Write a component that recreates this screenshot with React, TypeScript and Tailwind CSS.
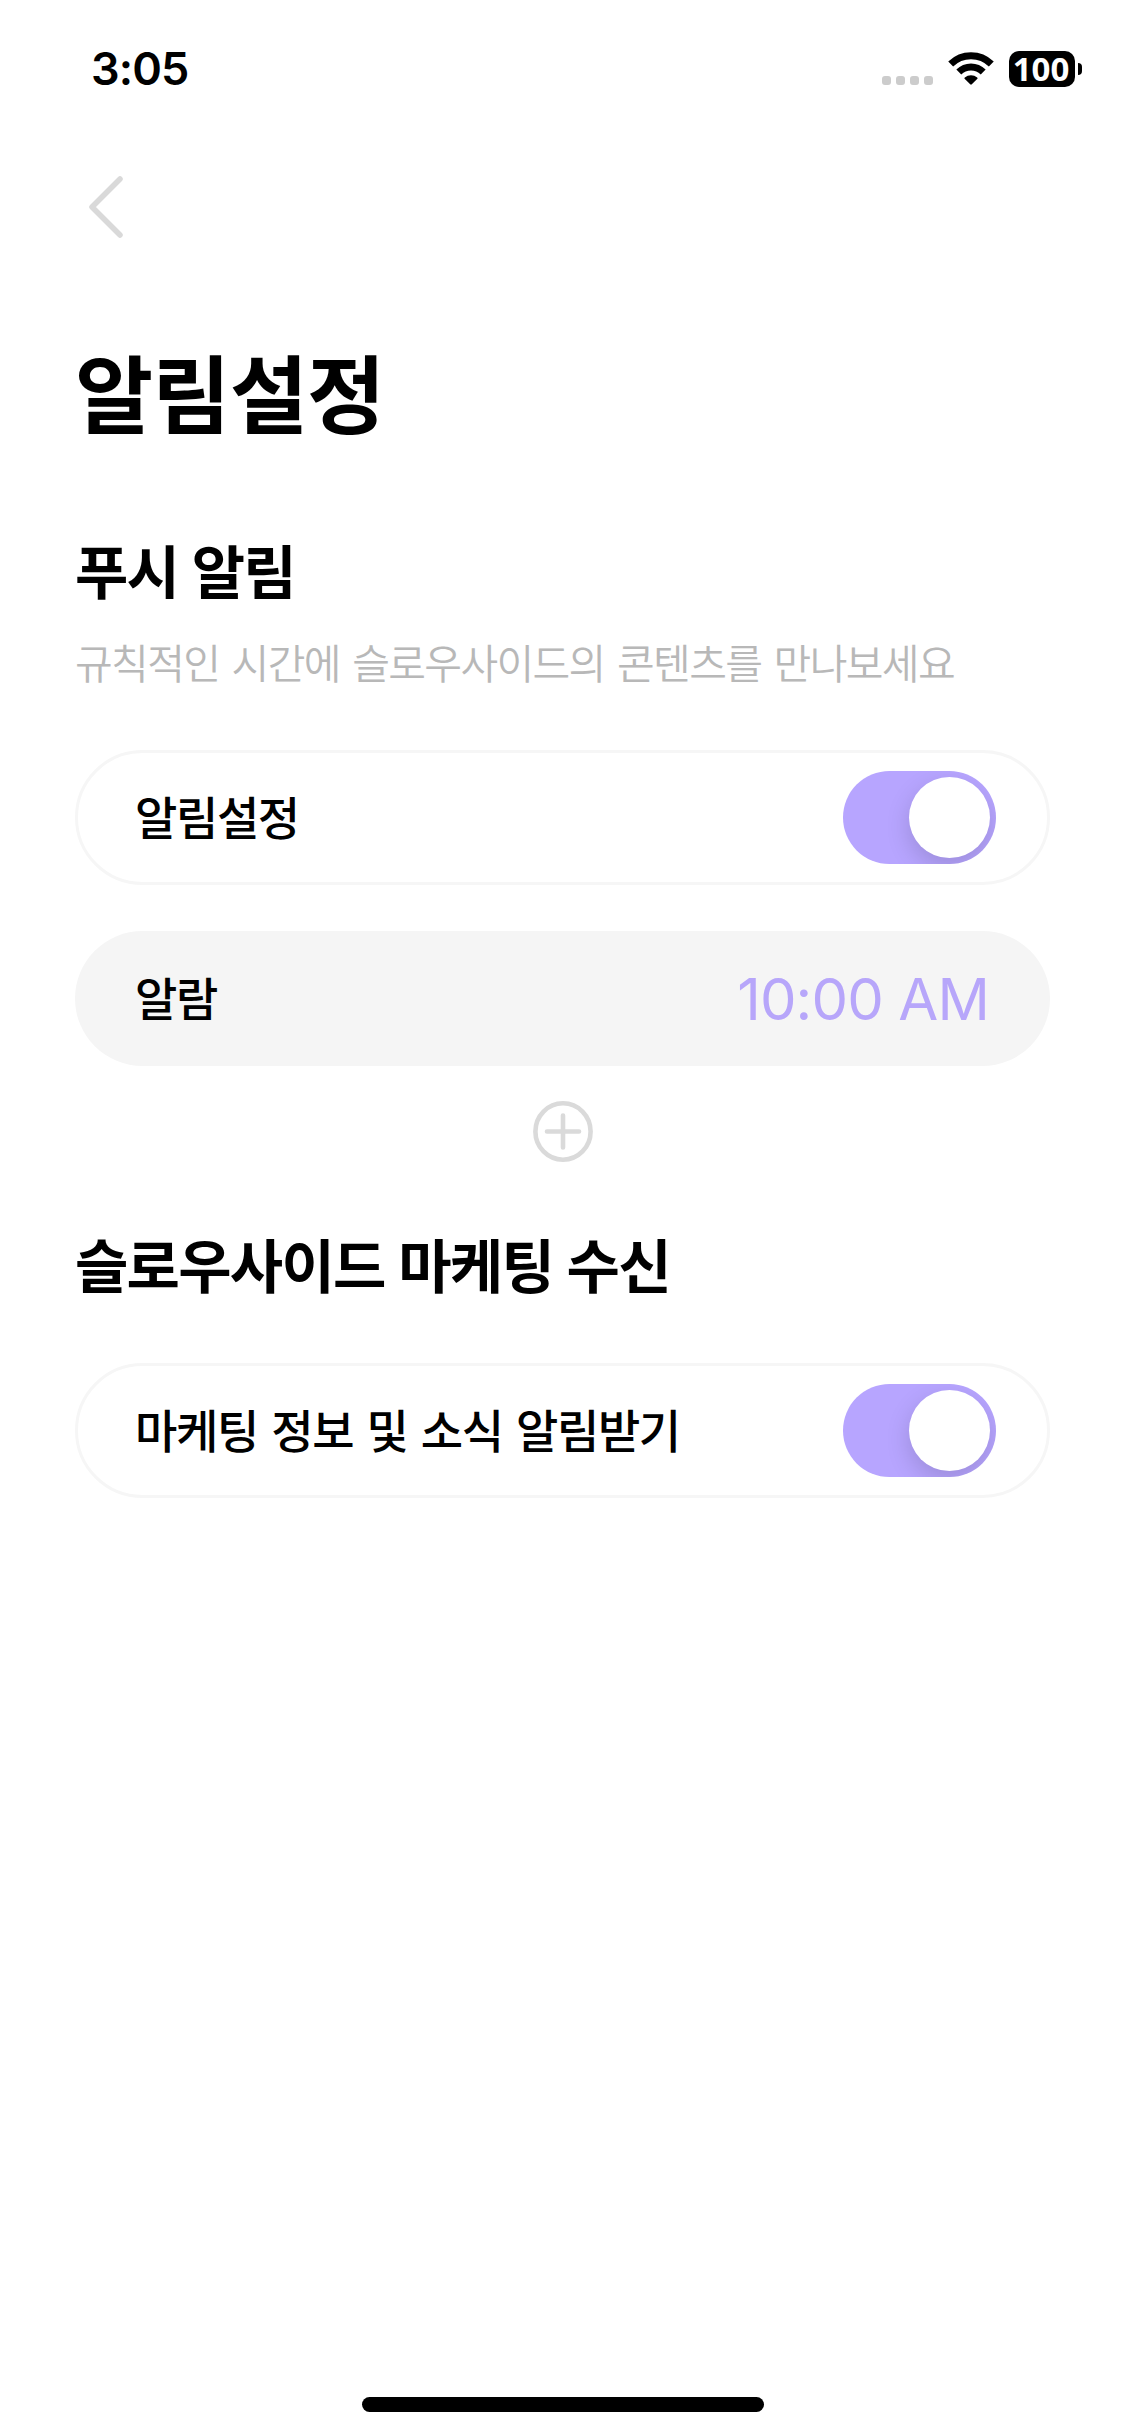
import type { ReactNode } from 'react'

const HEADING = 'text-[58px] leading-[80px] font-bold tracking-[-0.03em] [word-spacing:1.5px]'
const LABEL = 'text-[46px] leading-[60px] font-medium tracking-[-0.03em] [word-spacing:2.5px]'

export default function App() {
  return (
    <div className="flex h-[2436px] w-[1125px] flex-col bg-white font-['Inter','Noto_Sans_CJK_KR',sans-serif] text-black">
      <StatusBar />

      <header className="flex h-[62px] pl-[89px]">
        <button type="button" aria-label="뒤로">
          <BackIcon />
        </button>
      </header>

      <main className="flex flex-1 flex-col px-[75px]">
        <h1 className="mt-[94px] text-[85px] leading-[130px] font-bold tracking-[-0.01em]">
          알림설정
        </h1>

        <section className="mt-[71px]">
          <h2 className={HEADING}>푸시 알림</h2>
          <p className="mt-[21px] text-[41px] leading-[60px] font-[350] tracking-[-0.04em] [word-spacing:2.4px] whitespace-nowrap text-[#b8b8b8]">
            규칙적인 시간에 슬로우사이드의 콘텐츠를 만나보세요
          </p>
          <Row className="mt-[56px] border-[3px] border-[#f6f6f6] pr-[51px] pl-[57px]">
            <span className={LABEL}>알림설정</span>
            <Toggle />
          </Row>
          <Row className="mt-[46px] bg-[#f5f5f5] pr-[61px] pl-[60px]">
            <span className={LABEL}>알람</span>
            <span className="text-[58px] leading-[60px] tracking-[-0.015em] text-[#b7a6fa]">
              10:00 AM
            </span>
          </Row>
          <button
            type="button"
            aria-label="알람 추가"
            className="mx-auto mt-[35px] block"
          >
            <PlusIcon />
          </button>
        </section>

        <section className="mt-[65px]">
          <h2 className={HEADING}>슬로우사이드 마케팅 수신</h2>
          <Row className="mt-[56px] border-[3px] border-[#f6f6f6] pr-[51px] pl-[57px]">
            <span className={LABEL}>마케팅 정보 및 소식 알림받기</span>
            <Toggle />
          </Row>
        </section>
      </main>

      <div className="mx-auto mb-[24px] h-[15px] w-[402px] rounded-full bg-black" />
    </div>
  )
}

function StatusBar() {
  return (
    <div className="flex h-[176px] items-start justify-between pr-[43px] pl-[91px]">
      <span className="mt-[39px] text-[45px] leading-[60px] font-semibold tracking-[-0.02em]">
        3:05
      </span>
      <div className="mt-[51px] flex h-[36px]">
        <div className="mt-[25px] flex gap-[5px]">
          <span className="size-[9px] rounded-[3px] bg-[#cccccc]" />
          <span className="size-[9px] rounded-[3px] bg-[#cccccc]" />
          <span className="size-[9px] rounded-[3px] bg-[#cccccc]" />
          <span className="size-[9px] rounded-[3px] bg-[#cccccc]" />
        </div>
        <WifiIcon />
        <div className="ml-[15px] flex items-center">
          <span className="flex h-[36px] w-[66px] items-center justify-center rounded-[10px] bg-black pr-[2px] font-['Open_Sans',sans-serif] text-[33px] leading-[36px] font-bold text-white">
            100
          </span>
          <span className="ml-[3px] h-[12px] w-[4px] rounded-r-full bg-black" />
        </div>
      </div>
    </div>
  )
}

function Row({ className, children }: { className: string; children: ReactNode }) {
  return (
    <div className={`flex h-[135px] items-center justify-between rounded-full ${className}`}>
      {children}
    </div>
  )
}

function Toggle() {
  return (
    <button
      type="button"
      role="switch"
      aria-checked="true"
      className="flex h-[93px] w-[153px] items-center justify-end overflow-hidden rounded-full bg-[#b7a5ff] pr-[6px]"
    >
      <span className="size-[81px] rounded-full bg-white shadow-[0_9px_24px_rgba(0,0,0,0.15)]" />
    </button>
  )
}

function BackIcon() {
  return (
    <svg
      width="34"
      height="62"
      viewBox="0 0 34 62"
      fill="none"
      stroke="#d9d9d9"
      strokeWidth="5.5"
      strokeLinecap="round"
      strokeLinejoin="round"
    >
      <path d="M31 3 3 31l28 28" />
    </svg>
  )
}

function PlusIcon() {
  return (
    <svg
      width="60"
      height="61"
      viewBox="0 0 60 61"
      fill="none"
      stroke="#dadada"
      strokeWidth="4.6"
      strokeLinecap="round"
    >
      <ellipse cx="30" cy="30.5" rx="27.6" ry="28.2" />
      <path d="M30 14.5v32M14 30.5h32" />
    </svg>
  )
}

function WifiIcon() {
  return (
    <svg
      className="ml-[15px]"
      width="46"
      height="36"
      viewBox="0 0 46 36"
      fill="none"
      stroke="#000"
      strokeWidth="7"
    >
      <path d="M2.7 13.1a29 29 0 0 1 40.6 0" />
      <path d="M10.8 21a17.4 17.4 0 0 1 24.4 0" />
      <path
        d="M16.6 27.7q-.6-.7.2-1.3a10 10 0 0 1 12.4 0q.8.6.2 1.3l-5.6 5.6q-.8.7-1.6 0z"
        fill="#000"
        stroke="none"
      />
    </svg>
  )
}
